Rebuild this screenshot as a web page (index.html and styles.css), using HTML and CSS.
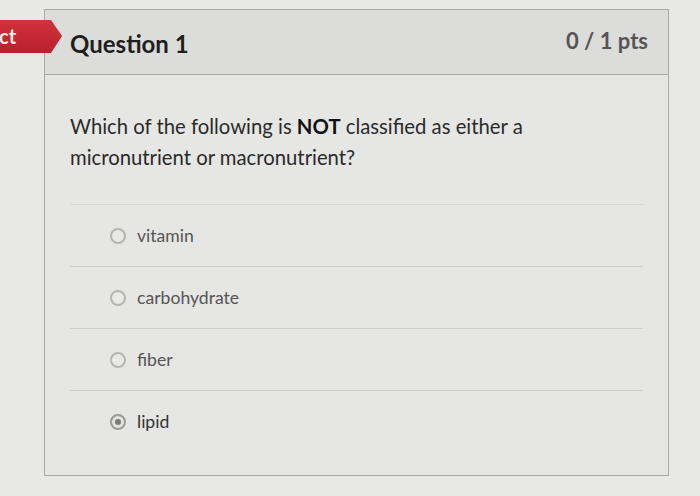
FILE: index.html
```html
<!DOCTYPE html>
<html>
<head>
<meta charset="utf-8">
<link rel="stylesheet" href="styles.css">
</head>
<body>
<div class="page">
  <div class="tag"><span class="tag-text">ct</span></div>
  <div class="card">
    <div class="header">
      <div class="title">Question 1</div>
      <div class="pts">0 / 1 pts</div>
    </div>
    <div class="body">
      <p class="question">Which of the following is <b>NOT</b> classified as either a micronutrient or macronutrient?</p>
      <div class="answers">
        <div class="answer"><span class="radio"></span><span class="label">vitamin</span></div>
        <div class="answer"><span class="radio"></span><span class="label">carbohydrate</span></div>
        <div class="answer"><span class="radio"></span><span class="label">fiber</span></div>
        <div class="answer selected"><span class="radio"></span><span class="label">lipid</span></div>
      </div>
    </div>
  </div>
</div>
</body>
</html>
```

FILE: styles.css
```css
html, body {
  margin: 0;
  padding: 0;
  background: #e8e8e6;
}
body {
  font-family: Lato, "Liberation Sans", sans-serif;
  width: 700px;
  height: 496px;
  overflow: hidden;
}
.page {
  position: relative;
  padding: 9px 0 0 44px;
}
.tag {
  position: absolute;
  left: 0;
  top: 20px;
  width: 62px;
  height: 33px;
  background: linear-gradient(#d2323c, #b8202b);
  clip-path: polygon(0 0, 51px 0, 62px 16px, 51px 33px, 0 33px);
  z-index: 2;
}
.tag-text {
  position: absolute;
  left: -1px;
  top: 4px;
  color: #f4eaea;
  font-size: 20px;
  font-weight: 700;
}
.card {
  width: 623px;
  height: 465px;
  border: 1px solid #a9a9a7;
  background: #e6e6e4;
}
.header {
  height: 64px;
  border-bottom: 1px solid #a9a9a7;
  background: #dcdcda;
  display: flex;
  align-items: center;
  justify-content: space-between;
  padding: 0 20px 0 25px;
}
.title {
  font-size: 24px;
  font-weight: 700;
  color: #1f1f1f;
  margin-top: 2px;
}
.pts {
  font-size: 22px;
  font-weight: 700;
  color: #555555;
  margin-bottom: 4px;
}
.body {
  padding: 36px 25px 0 25px;
}
.question {
  margin: 0 0 31px 0;
  font-size: 20.3px;
  line-height: 31px;
  color: #2a2a2a;
  width: 500px;
}
.question b {
  font-weight: 700;
  color: #111;
}
.answer {
  height: 61px;
  border-top: 1px solid #cdcdcb;
  display: flex;
  align-items: center;
  padding-left: 40px;
  gap: 11px;
}
.answer:first-child {
  border-top-color: #d8d8d6;
}
.radio {
  width: 12px;
  height: 12px;
  border: 2px solid #b4b4b2;
  border-radius: 50%;
  background: #e8e8e6;
  display: inline-block;
  position: relative;
}
.label {
  font-size: 17.6px;
  color: #555555;
}
.selected .radio {
  border-color: #9a9a98;
  background: #e2e2e0;
}
.selected .radio::after {
  content: "";
  position: absolute;
  left: 3px;
  top: 3px;
  width: 6px;
  height: 6px;
  border-radius: 50%;
  background: #7a7a78;
}
.selected .label {
  color: #333333;
}
```
